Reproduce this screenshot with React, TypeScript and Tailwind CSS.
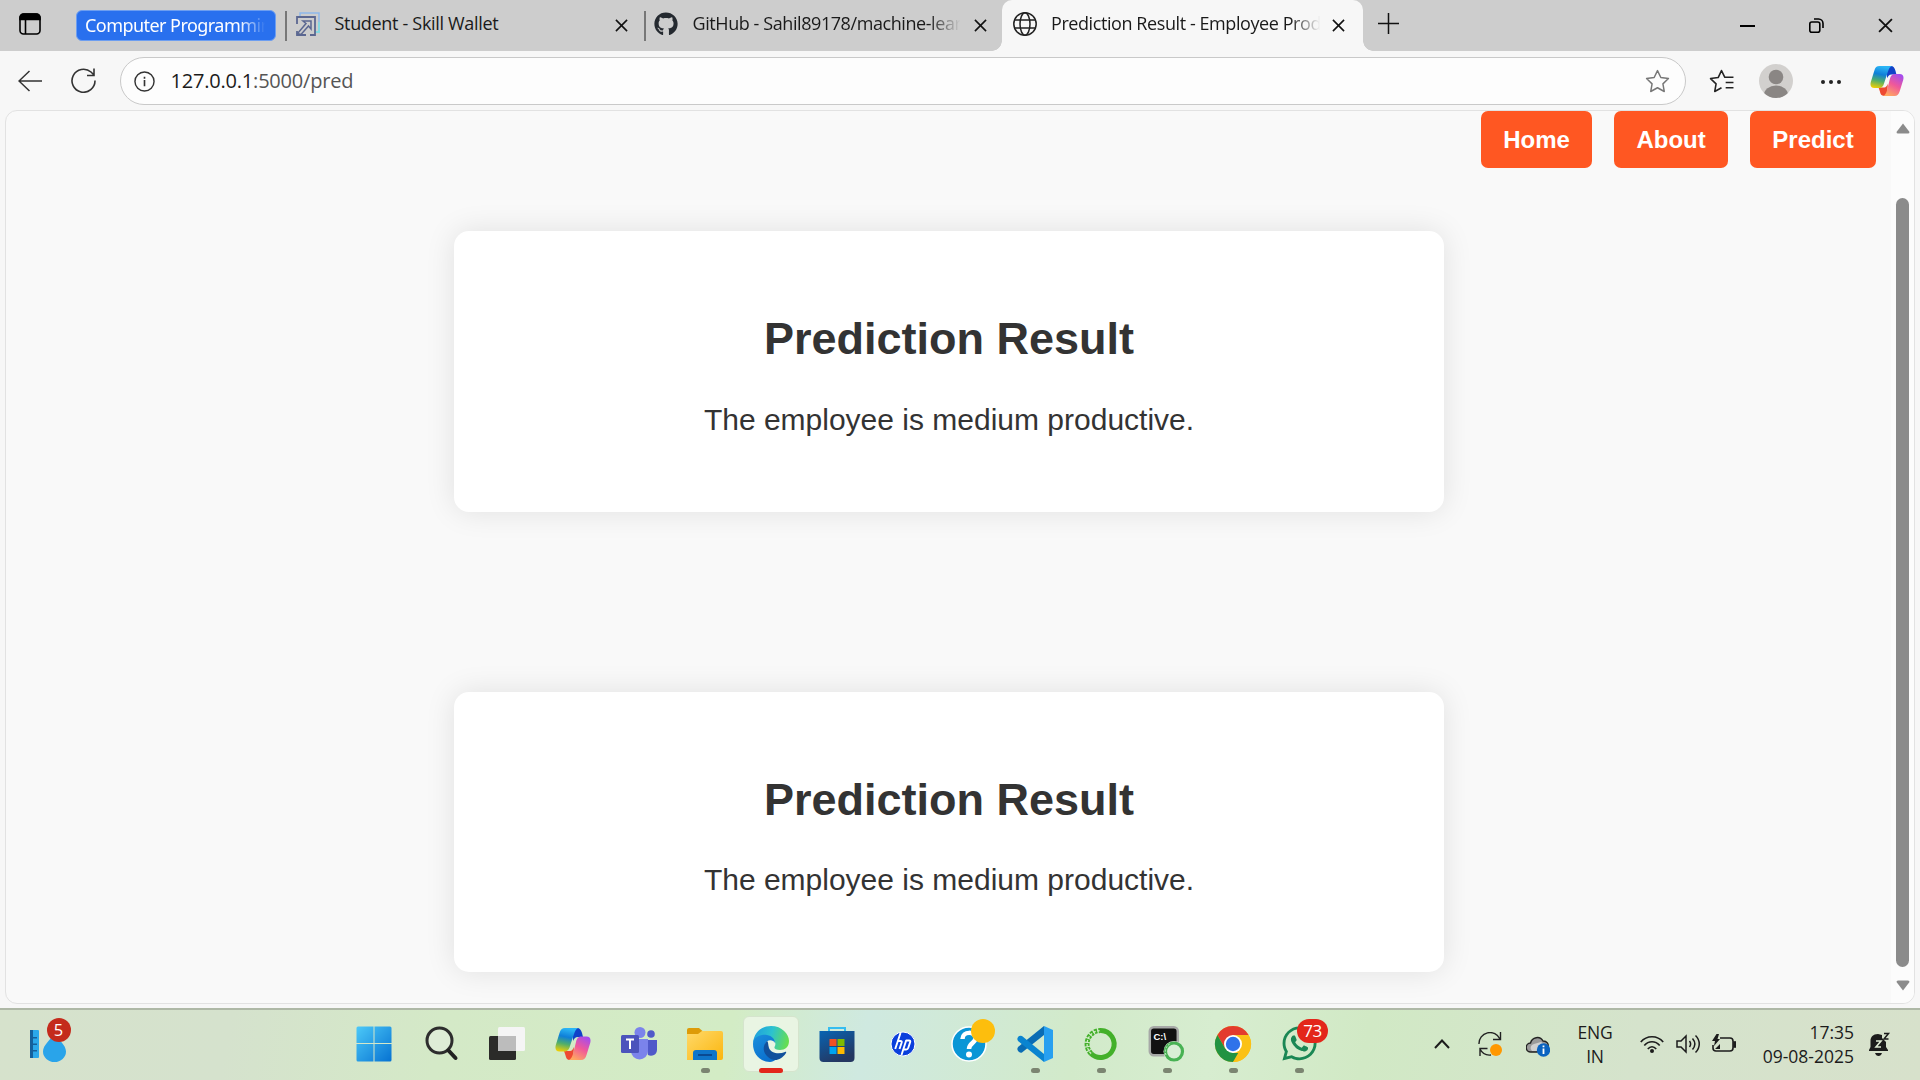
import React from "react";
import { FaGithub, FaWhatsapp } from "react-icons/fa";

type Box = { className?: string };

function Copilot({ id, className = "" }: { id: string; className?: string }) {
  return (
    <svg viewBox="0 0 36 34" className={className}>
      <defs>
        <linearGradient id={id + "a"} x1="0.4" y1="0" x2="0.2" y2="1">
          <stop offset="0" stopColor="#2bb5f5" />
          <stop offset=".35" stopColor="#0f7fd8" />
          <stop offset=".65" stopColor="#4fae6c" />
          <stop offset="1" stopColor="#f5d000" />
        </linearGradient>
        <linearGradient id={id + "b"} x1="0.8" y1="0" x2="0.3" y2="1">
          <stop offset="0" stopColor="#a24cf0" />
          <stop offset=".5" stopColor="#f0589a" />
          <stop offset="1" stopColor="#ffa860" />
        </linearGradient>
      </defs>
      <path d="M18 1h4c3 0 4 2 5 5l1 4h-5c-3 0-4 2-5 4z" fill="#1142c8" />
      <path d="M9 24h6c2 0 3-2 4-4l-1 12c-1 1-2 1-3 1-3 0-4-2-4.600-5z" fill="#ee4a32" />
      <path d="M10 1h13c-2 1-3 3-4 6l-4 12c-1 4-3 5.500-6 5.500H4.500C1 24.500-.2 22 .8 18L4.500 6C5.500 2.500 7 1 10 1z" fill={`url(#${id}a)`} />
      <path d="M26.500 9.500h5c3.500 0 4.700 2.500 3.700 6.500l-3.700 12c-1 3.500-2.500 5-5.500 5H14c2-1 3-3 4-6l3-12c1-4 2.500-5.500 5.500-5.500z" fill={`url(#${id}b)`} />
    </svg>
  );
}

function Close({ className = "" }: Box) {
  return (
    <svg viewBox="0 0 14 14" className={className} stroke="#111" strokeWidth="1.7" fill="none">
      <path d="M1 1l12 12M13 1L1 13" />
    </svg>
  );
}

function TabStrip() {
  return (
    <div className="flex h-[51px] shrink-0 items-start bg-[#cdcdcd] text-[18px] text-[#1a1a1a]">
      <svg viewBox="0 0 22 22" className="mt-[13px] ml-[19px] size-[22px]" fill="none" stroke="#000" strokeWidth="1.600">
        <rect x="1" y="1" width="20" height="20" rx="3.500" />
        <path d="M1 5a4 4 0 0 1 4-4h12a4 4 0 0 1 4 4v1.500H1z" fill="#000" />
        <path d="M6.500 6v15" />
      </svg>
      <div className="mt-2.5 ml-[35px] h-[31px] w-[200px] rounded-md border border-[#6d9ef0] bg-[#2970ee] pl-[8px] font-['Noto_Sans',sans-serif] leading-[29px] whitespace-nowrap text-white">
        <div className="w-[184px] tracking-[-0.55px] [mask-image:linear-gradient(to_right,black_84%,transparent_98%)]">Computer Programmin</div>
      </div>
      <div className="mt-[11px] ml-[9px] h-[30px] w-[1.500px] bg-[#777]" />
      <div className="flex h-12 w-[357.500px] items-center pl-[9px]">
        <svg viewBox="0 0 24 24" className="size-6 shrink-0" fill="none">
          <path d="M4 5V1h19v19h-4" stroke="#8fb8ea" strokeWidth="1.500" />
          <path d="M23 10v10h-4" stroke="#7fe0e0" strokeWidth="1.500" />
          <path d="M1 12V5h18v18h-5M1 19v4h9" stroke="#5b6791" strokeWidth="1.800" />
          <path d="M7 9h8v8l-2.500-3L5 22.500l-3.500-1L10 11.500z" stroke="#5b6791" strokeWidth="1.500" />
        </svg>
        <span className="-mt-0.5 ml-[15px] w-[280px] whitespace-nowrap tracking-[-0.32px]">Student - Skill Wallet</span>
        <Close className="mt-0.5 size-[13px] shrink-0" />
      </div>
      <div className="mt-[11px] h-[30px] w-[1.500px] bg-[#777]" />
      <div className="flex h-12 w-[356.500px] items-center pl-2">
        <FaGithub className="size-6 shrink-0 text-[#24292f]" />
        <span className="-mt-0.5 ml-[15px] w-[270px] shrink-0 whitespace-nowrap tracking-[-0.42px] [mask-image:linear-gradient(to_right,black_87%,transparent_99%)]">GitHub - Sahil89178/machine-lear</span>
        <Close className="mt-0.5 ml-[11px] size-[13px] shrink-0" />
      </div>
      <div className="relative flex h-[51px] w-[361px] items-start rounded-t-[10px] bg-[#f7f7f7]">
        <div className="absolute bottom-0 -left-2.5 size-2.5 bg-[radial-gradient(circle_at_0_0,transparent_9.500px,#f7f7f7_10px)]" />
        <div className="absolute -right-2.5 bottom-0 size-2.5 bg-[radial-gradient(circle_at_100%_0,transparent_9.500px,#f7f7f7_10px)]" />
        <div className="flex h-12 items-center pl-[11px]">
          <svg viewBox="0 0 24 24" className="size-6 shrink-0" fill="none" stroke="#222" strokeWidth="1.500">
            <circle cx="12" cy="12" r="11.200" />
            <ellipse cx="12" cy="12" rx="5" ry="11.200" />
            <path d="M1.800 8h20.400M1.800 16h20.400" />
          </svg>
          <span className="-mt-0.5 ml-[14px] w-[272px] shrink-0 whitespace-nowrap tracking-[-0.42px] [mask-image:linear-gradient(to_right,black_88%,transparent_99%)]">Prediction Result - Employee Prod</span>
          <Close className="mt-0.5 ml-[9px] size-[13px] shrink-0" />
        </div>
      </div>
      <svg viewBox="0 0 21 21" className="mt-[13px] ml-[15px] size-[21px]" stroke="#111" strokeWidth="1.500">
        <path d="M10.500 0v21M0 10.500h21" />
      </svg>
      <div className="ml-auto flex h-[51px] items-center">
        <div className="mr-[54px] h-[2px] w-[15px] bg-black" />
        <svg viewBox="0 0 15 15" className="mr-[54px] size-[15px]" fill="none" stroke="#000" strokeWidth="1.600">
          <rect x=".8" y="4" width="10" height="10.200" rx="2" />
          <path d="M5 1h4.500A4.500 4.500 0 0 1 14 5.500V10" />
        </svg>
        <Close className="mr-[27px] size-[15px]" />
      </div>
    </div>
  );
}

const star = "M12 1.500l3.200 6.700 7.300 1-5.300 5.100 1.300 7.300L12 18l-6.500 3.600 1.300-7.300L1.500 9.200l7.300-1z";

function Toolbar() {
  return (
    <div className="flex h-[59px] shrink-0 items-center">
      <svg viewBox="0 0 24 22" className="ml-[18px] h-[22px] w-6" fill="none" stroke="#333" strokeWidth="1.500">
        <path d="M24 11H1M11.500 1L1 11l10.500 10" />
      </svg>
      <svg viewBox="0 0 25 25" className="ml-[29px] size-[25px]" fill="none" stroke="#333" strokeWidth="1.600">
        <path d="M24 12.500A11.500 11.500 0 1 1 20 4l3 3M23 .5v7h-7" />
      </svg>
      <div className="mt-px ml-6 flex h-12 w-[1566px] items-center rounded-full border border-[#c9c9c9] bg-[#fdfdfd] pr-[15px] pl-[12.500px]">
        <svg viewBox="0 0 22 22" className="size-[21px]" fill="none" stroke="#333" strokeWidth="1.500">
          <circle cx="11" cy="11" r="10" />
          <path d="M11 9.500V16M11 6v2" strokeWidth="1.700" />
        </svg>
        <span className="ml-4 text-[20px] tracking-[-0.2px] text-[#555]"><span className="text-[#1b1b1b]">127.0.0.1</span>:5000/pred</span>
        <svg viewBox="0 0 24 24" className="ml-auto size-[25px]" fill="none" stroke="#777" strokeWidth="1.400" strokeLinejoin="round"><path d={star} /></svg>
      </div>
      <svg viewBox="0 0 24 24" className="mt-0.5 ml-[23px] size-[25px]" fill="none" stroke="#222" strokeWidth="1.500" strokeLinejoin="round">
        <path d="M23.500 8h-8.300L12 1.500 8.800 8.200l-7.300 1 5.300 5.100-1.300 7.300L12 18M16 13h7.500M16 18h7.500" />
      </svg>
      <svg viewBox="0 0 34 34" className="ml-[25px] size-[34px]">
        <clipPath id="av"><circle cx="17" cy="17" r="17" /></clipPath>
        <g clipPath="url(#av)">
          <rect width="34" height="34" fill="#d2d0ce" />
          <circle cx="17" cy="13" r="7.300" fill="#8a8684" />
          <ellipse cx="17" cy="31" rx="12" ry="9.500" fill="#8a8684" />
        </g>
      </svg>
      <div className="mt-0.5 ml-[27.500px] flex gap-1">
        {[0, 1, 2].map((i) => <div key={i} className="size-1 rounded-full bg-[#222]" />)}
      </div>
      <Copilot id="tc" className="mt-px mr-4 ml-auto h-8 w-[34px]" />
    </div>
  );
}

function ResultCard({ className = "" }: Box) {
  return (
    <section className={"h-[280.500px] w-[990px] shrink-0 rounded-[15px] bg-white pt-[82px] text-center text-[#333] shadow-[0_0_30px_rgba(0,0,0,0.1)] " + className}>
      <h2 className="text-[45px] leading-[52px] font-bold">Prediction Result</h2>
      <p className="mt-[37.500px] text-[30px] leading-[34px]">The employee is medium productive.</p>
    </section>
  );
}

function Page() {
  return (
    <main className="mx-[5px] flex h-[893.500px] shrink-0 overflow-hidden rounded-[12px] border border-[#e2e2e2] bg-[#f9f9f9] font-['Liberation_Sans',Arial,sans-serif]">
      <div className="flex grow flex-col">
        <nav className="mr-[15px] flex justify-end gap-[22px]">
          {["Home", "About", "Predict"].map((label) => (
            <a key={label} className="h-[57px] rounded-[7px] bg-[#ff5722] px-[22.300px] text-2xl leading-[57px] font-bold text-white">{label}</a>
          ))}
        </nav>
        <div className="ml-[448px] flex flex-col">
          <ResultCard className="mt-[63px]" />
          <ResultCard className="mt-[180px]" />
        </div>
      </div>
      <div className="flex w-[23px] flex-col items-center bg-[#fcfcfc]">
        <svg viewBox="0 0 14 11" className="mt-3 h-[11px] w-[14px]"><path d="M7 0.500L13.500 9q0 1.500-1.500 1.500H2Q.5 10.500.5 9z" fill="#8b8b8b" /></svg>
        <div className="mt-[64px] h-[769px] w-[13px] rounded-full bg-[#8b8b8b]" />
        <svg viewBox="0 0 14 11" className="mt-[12.500px] h-[11px] w-[14px]"><path d="M7 10.500L13.500 2Q13.500.5 12 .5H2Q.5.5.5 2z" fill="#8b8b8b" /></svg>
      </div>
    </main>
  );
}

function Weather() {
  return (
    <div className="relative ml-[30px] h-[45px] w-[42px]">
      <svg viewBox="0 0 42 45" className="size-full">
        <rect x="0" y="12" width="9" height="28" rx="1" fill="#2ba8ea" />
        <path d="M0 12h3v28H0zM3 19h4v1.500H3zM3 25.500h4V27H3zM3 32h4v1.500H3z" fill="#14609c" />
        <path d="M24.500 15c4 7 11.500 12 11.500 18.500a11.500 10.500 0 0 1-23 0C13 27 20.500 22 24.500 15z" fill="#29a4ea" />
      </svg>
      <div className="absolute top-0 left-[16.500px] flex size-6 items-center justify-center rounded-full bg-[#c42b1c] text-[16.500px] text-white">5</div>
    </div>
  );
}

const AppIcons: { key: string; art: React.ReactNode; running?: boolean }[] = [
  {
    key: "start",
    art: (
      <g transform="translate(-1 0)">
        <linearGradient id="w" x1="0" y1="0" x2="1" y2="1" gradientUnits="objectBoundingBox"><stop stopColor="#4cc9f8" /><stop offset="1" stopColor="#0672d2" /></linearGradient>
        <path d="M2 .5h15.500v16.500H.5V2Q.5.5 2 .5zM18.500.5H34Q35.500.5 35.500 2v15h-17zM.5 18h17v17.500H2Q.5 35.500.5 34zM18.500 18h17v16q0 1.500-1.500 1.500H18.500z" fill="url(#w)" />
      </g>
    ),
  },
  {
    key: "search",
    art: <g><circle cx="16.500" cy="14.500" r="12.500" fill="#e5eee0" fillOpacity=".6" stroke="#2d2d2d" strokeWidth="3" /><path d="M25.500 24.500l7 7.500" stroke="#222" strokeWidth="4" strokeLinecap="round" /></g>,
  },
  {
    key: "taskview",
    art: <g><rect x="0" y="10" width="27" height="24" rx="1.500" fill="#2b2b29" /><rect x="9" y="1" width="27" height="24" rx="1.500" fill="#f5f5f5" /><path d="M9 10h18v15H9z" fill="#bcbcbc" /></g>,
  },
  { key: "copilot", art: null },
  {
    key: "teams",
    art: (
      <g>
        <circle cx="30" cy="8" r="3.800" fill="#5059c9" /><path d="M25 14h11v10a6 6 0 0 1-9 5z" fill="#5059c9" />
        <circle cx="19" cy="6.500" r="5.500" fill="#7b83eb" /><path d="M10 13h17v12a8.500 8.500 0 0 1-17 0z" fill="#7b83eb" />
        <rect x="0" y="9" width="18" height="18" rx="1.500" fill="#4b53bc" /><path d="M5 13.500h8M9 13.500V23" stroke="#fff" strokeWidth="2" />
      </g>
    ),
  },
  {
    key: "explorer", running: true,
    art: (
      <g>
        <linearGradient id="f" x1="0" y1="0" x2="1" y2="1"><stop stopColor="#ffd96a" /><stop offset="1" stopColor="#fbb60e" /></linearGradient>
        <path d="M0 4q0-2 2-2h10l4 3.500V12H0z" fill="#dd9b08" /><path d="M0 8h11l4-3h19q2 0 2 2v25q0 2-2 2H0z" fill="url(#f)" />
        <path d="M6 34v-7q0-3 3-3h18q3 0 3 3v7z" fill="#0f75c9" /><path d="M11 29h14" stroke="#0a4a92" strokeWidth="2" />
      </g>
    ),
  },
  {
    key: "edge",
    art: (
      <g>
        <linearGradient id="e1" x1="0" y1=".3" x2="1" y2=".5"><stop stopColor="#1e9fdf" /><stop offset=".5" stopColor="#2cc2cf" /><stop offset="1" stopColor="#66de50" /></linearGradient>
        <linearGradient id="e2" x1="0" y1="0" x2=".6" y2="1"><stop stopColor="#1b8fdc" /><stop offset="1" stopColor="#0a6fce" /></linearGradient>
        <path d="M0 17C1 6 9 0 18 0c11 0 18 8 18 15 0 6-4 9-9 9-4 0-6-1-5.500-3 2-3 1-8-5.500-9C8 10 2 12 0 17z" fill="url(#e1)" />
        <path d="M0 18C0 11 8 8 14 9c5 1 8 4 8 8-2-4-9-4-10 2-1 8 5 13 12 14-3 2-5 3-7 3C7 36 0 28 0 18z" fill="url(#e2)" />
        <path d="M14 15c-5 5-4 12 1 16 5 5 13 4 18-4 .5-1 0-1.500-1-1-6 2.500-14 1.500-16-4-1-3-.5-6-2-7z" fill="#11509c" />
      </g>
    ),
  },
  {
    key: "store",
    art: (
      <g>
        <linearGradient id="s" x1="0" y1="0" x2=".5" y2="1"><stop stopColor="#0864b3" /><stop offset="1" stopColor="#243761" /></linearGradient>
        <path d="M10 7V2h16v5" fill="none" stroke="#35bdf0" strokeWidth="2" /><path d="M.5 5h35v27q0 4-4 4h-27q-4 0-4-4z" fill="url(#s)" />
        <path d="M10.500 13h7v7h-7z" fill="#f25022" /><path d="M18.500 13h7v7h-7z" fill="#7fba00" /><path d="M10.500 21h7v7h-7z" fill="#00a4ef" /><path d="M18.500 21h7v7h-7z" fill="#ffb900" />
      </g>
    ),
  },
  {
    key: "hp",
    art: <g><circle cx="18" cy="18" r="12" fill="#0a3fdc" stroke="#fff" strokeWidth="1" /><path d="M15.500 7l-5.300 16M12.700 15h2.800q1.700 0 1.200 1.500L14.500 23M21.300 14L16.500 29M21 14.500h3q1.700 0 1.200 1.500l-2 6q-.5 1.500-2 1.500h-2.700" fill="none" stroke="#fff" strokeWidth="1.900" /></g>,
  },
  {
    key: "help",
    art: <g><circle cx="18" cy="18" r="17" fill="#0a96d6" stroke="#fff" strokeWidth="1.500" /><path d="M11.500 13c0-8 13-8 13-1 0 5-6.500 5-6.500 11" fill="none" stroke="#fff" strokeWidth="4.500" /><circle cx="18" cy="28.500" r="3" fill="#fff" /><circle cx="32" cy="5" r="12" fill="#fdbe0d" /></g>,
  },
  {
    key: "vscode", running: true,
    art: <g><path d="M1 25q-1.500-2 0-4L27 0v9L5 26.500q-2 1-4-1.500z" fill="#0a6cb4" /><path d="M27 0l9 4v28l-9 4z" fill="#28a0f0" /><path d="M1 11q1.500-2 4-1l22 18v8L1 15q-1.500-2 0-4z" fill="#0a84d0" /></g>,
  },
  {
    key: "anaconda", running: true,
    art: <g fill="none"><path d="M18 4.500a13.500 13.500 0 1 1-10 23" stroke="#43b02a" strokeWidth="5" /><path d="M8 27.500A13.500 13.500 0 0 1 18 4.500" stroke="#43b02a" strokeWidth="5" strokeDasharray="3 1.200" /><path d="M8 27.500A13.500 13.500 0 0 1 18 4.500" stroke="#d7edcc" strokeWidth="1.200" strokeDasharray="2.500 1.500" /></g>,
  },
  {
    key: "cmd", running: true,
    art: <g><rect x=".8" y="1.200" width="28" height="28" rx="4" fill="#111" stroke="#a7a9a7" strokeWidth="2.500" /><text x="4.500" y="13.500" fontSize="9.500" fontWeight="700" fill="#fff" fontFamily="Liberation Sans, sans-serif">C:\</text><circle cx="25" cy="25.500" r="10.500" fill="#d9efd5" /><circle cx="25" cy="25.500" r="8.500" fill="none" stroke="#48b253" strokeWidth="3.200" /><path d="M17 29a8.500 8.500 0 0 1 5-11.500" fill="none" stroke="#c9ecc9" strokeWidth="1" strokeDasharray="2 1.500" /></g>,
  },
  {
    key: "chrome", running: true,
    art: <g><circle cx="18" cy="18" r="18" fill="#fbc116" /><path d="M2.400 9a18 18 0 0 1 31.200 0H18L10.200 22.500z" fill="#e33b2e" /><path d="M2.400 9L10.200 22.500 18 27h7.800L18 36A18 18 0 0 1 2.400 9z" fill="#229342" /><path d="M33.600 9A18 18 0 0 1 18 36l7.800-13.500L25 12V9z" fill="#fbc116" /><circle cx="18" cy="18" r="9" fill="#fff" /><circle cx="18" cy="18" r="7.200" fill="#2f72ea" /></g>,
  },
  { key: "whatsapp", art: null, running: true },
];

function TaskbarApps() {
  return (
    <div className="ml-[270px] flex h-[70px]">
      {AppIcons.map(({ key, art, running }) => (
        <div key={key} className="relative flex w-[66px] shrink-0 justify-center pt-1.5">
          <div className={"flex size-14 justify-center rounded-md " + (key === "edge" ? "border border-[#d5e4cd] bg-[#e9f5e3] pt-[9px]" : "pt-2.5")}>
            {key === "copilot" ? <Copilot id="bc" className="mt-px h-[34px] w-9" /> : key === "whatsapp" ? <FaWhatsapp className="-mt-0.5 size-[39px] shrink-0 text-[#1a8754]" /> : <svg viewBox="0 0 36 36" className="size-9 overflow-visible">{art}</svg>}
          </div>
          {key === "whatsapp" && <div className="absolute top-[9px] left-[31px] flex h-6 w-[31px] items-center justify-center rounded-full bg-[#e3261b] text-[17px] tracking-tight text-white">73</div>}
          {running && <div className="absolute top-[58px] left-[28.500px] h-[5px] w-[9px] rounded-full bg-[#7b8571]" />}
          {key === "edge" && <div className="absolute top-[58px] left-[21px] h-[5px] w-6 rounded-full bg-[#e3261b]" />}
        </div>
      ))}
    </div>
  );
}

function Tray() {
  return (
    <div className="ml-auto flex h-[68px] items-center text-[17.500px] text-[#1c1c1c]">
      <svg viewBox="0 0 16 10" className="mr-7 h-[10px] w-4" fill="none" stroke="#1c1c1c" strokeWidth="2"><path d="M1 9l7-7.500L15 9" /></svg>
      <svg viewBox="0 0 24 24" className="mr-6 size-6" fill="none" stroke="#222" strokeWidth="1.400"><path d="M1 12A11 11 0 0 1 22 7M22.500 0v7.500H15M2 24v-7.500h7.500M2 17c2.500 5 7 6.500 11 6" /><circle cx="18" cy="18" r="6" fill="#ff9800" stroke="none" /></svg>
      <svg viewBox="0 0 24 21" className="mt-1 mr-[27px] h-[21px] w-6"><path d="M5 16a4.500 4.500 0 0 1-.5-9C6 1 14-.5 17 5c4 0 6 3 5 6L11 16z" fill="#9a9a9a" stroke="#222" strokeWidth="1.400" /><path d="M6 15a4 4 0 0 1 2-7l7-2 5 3-8 6z" fill="#d0d0d0" /><circle cx="17.500" cy="14" r="6.700" fill="#0a63c0" /><path d="M17.500 12.500V18M17.500 9.500v1.700" stroke="#fff" strokeWidth="1.800" /></svg>
      <div className="mr-[27px] w-[36px] text-center leading-6 tracking-[-0.2px]">ENG<br />IN</div>
      <svg viewBox="0 0 24 19" className="mr-3 h-[19px] w-6" fill="none" stroke="#1c1c1c" strokeWidth="1.700"><path d="M.8 7c6-7 16.400-7 22.400 0M4.300 10.500c4.300-5 11.100-5 15.400 0M7.800 14c2.500-3 5.900-3 8.400 0" /><circle cx="12" cy="16" r="2" fill="#1c1c1c" stroke="none" /></svg>
      <svg viewBox="0 0 24 20" className="mr-3 h-5 w-6" fill="none" stroke="#1c1c1c" strokeWidth="1.500"><path d="M1 7h4l5-5v16l-5-5H1zM13.500 7c1.500 2 1.500 4 0 6M16.500 4.500c3 3.500 3 7.500 0 11M19.500 1.500c5 5 5 12 0 17" /></svg>
      <svg viewBox="0 0 24 20" className="mr-[22px] h-5 w-6" fill="none" stroke="#1c1c1c" strokeWidth="1.600"><path d="M8 4h10q3 0 3 3v7q0 3-3 3H4q-3 0-3-3v-3" /><path d="M22 8h1.500v5H22z" fill="#1c1c1c" /><path d="M4.500 0L0 7h3l-1 5 6-7H5.500L7 0zM3 15l5-5v5z" fill="#1c1c1c" stroke="none" /></svg>
      <div className="mr-[15px] w-[96px] text-right leading-6 whitespace-nowrap">17:35<br />09-08-2025</div>
      <svg viewBox="0 0 20 23" className="mr-[31px] h-[23px] w-5 overflow-visible"><path d="M9 1C4 1 1.500 4 1.500 8v6L0 17v1h19v-1l-2-3V9l-4-4V2z" fill="#1c1c1c" /><path d="M6 20h7q-1 3-3.500 3T6 20z" fill="#1c1c1c" /><path d="M7 8h5l-5 6h5" stroke="#e0ebd5" strokeWidth="1.600" fill="none" /><path d="M15 .5h4.500L15 6h4.500" stroke="#1c1c1c" strokeWidth="1.500" fill="none" /></svg>
    </div>
  );
}

export default function App() {
  return (
    <div className="flex h-[1080px] w-[1920px] flex-col overflow-hidden bg-[#f7f7f7] font-['Open_Sans','Noto_Sans',sans-serif]">
      <TabStrip />
      <Toolbar />
      <Page />
      <footer className="mt-[4.500px] flex h-[72px] shrink-0 border-t-2 border-[#aeb8a6] bg-[linear-gradient(100deg,#d6e2cc_0%,#d5e2cd_12%,#d4e9c7_23%,#d3ecc5_38%,#cfe9e0_45%,#d2eaca_56%,#d7edd0_63%,#d1e9c5_71%,#d5e3cc_85%,#d7e1cb_100%)]">
        <div className="pt-2"><Weather /></div>
        <TaskbarApps />
        <Tray />
      </footer>
    </div>
  );
}
